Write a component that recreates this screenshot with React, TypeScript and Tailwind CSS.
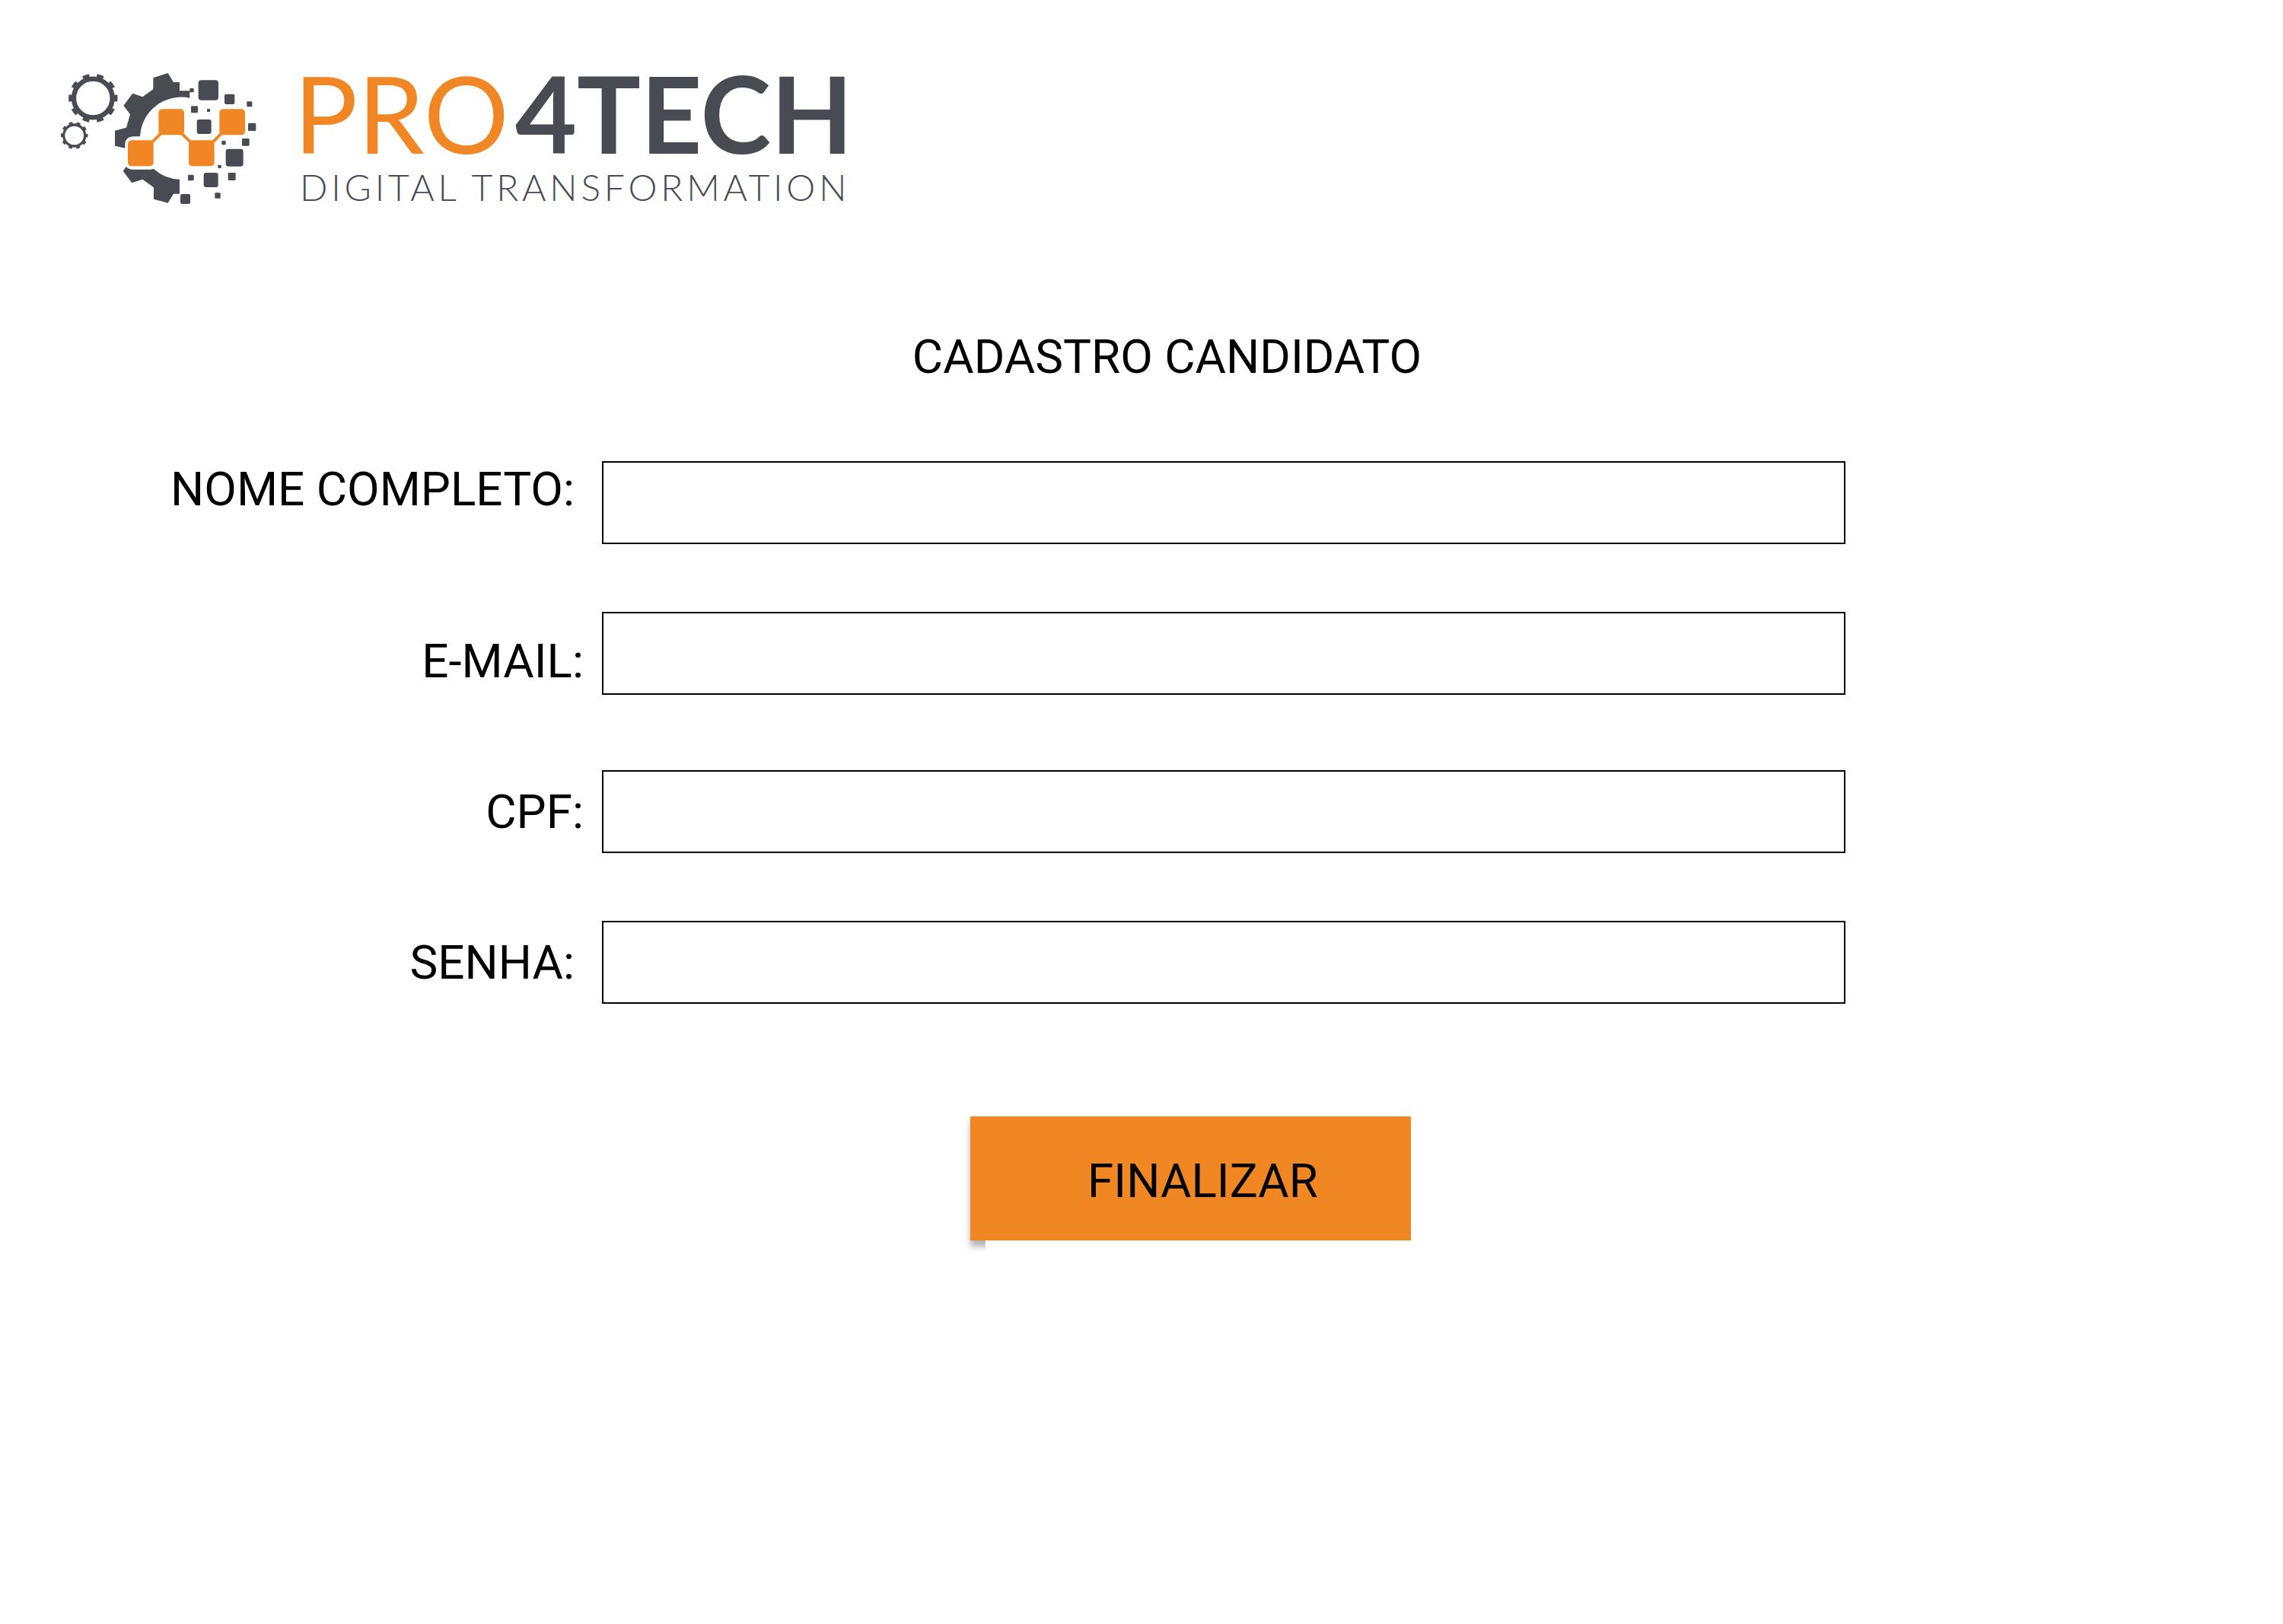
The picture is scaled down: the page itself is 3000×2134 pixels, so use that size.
const darkSquares: [number, number, number, number][] = [
  [602, 76, 79, 12],
  [705, 131, 40, 6],
  [793, 160, 21, 3],
  [568, 108, 16, 3],
  [573, 178, 27, 4],
  [636, 189, 12, 2],
  [596, 231, 57, 9],
  [798, 245, 31, 4],
  [774, 306, 29, 4],
  [694, 315, 16, 3],
  [710, 347, 69, 10],
  [679, 410, 13, 2],
  [623, 441, 57, 9],
  [719, 441, 30, 4],
  [561, 449, 23, 3],
  [667, 520, 22, 3],
  [531, 525, 39, 6],
];

const orangeSquares: [number, number][] = [
  [445, 190],
  [685, 190],
  [324, 313],
  [564, 313],
];

function LogoMark() {
  return (
    <svg viewBox="0 0 900 600" className="mt-0.5 h-[200px] w-[300px] shrink-0" aria-hidden="true">
      <g fill="none" stroke="#484b52">
        <circle cx="187" cy="147" r="76" strokeWidth="19" />
        <circle cx="187" cy="147" r="89" strokeWidth="15" pathLength={20} strokeDasharray="0.95 1.05" strokeDashoffset="0.475" />
        <circle cx="113" cy="294" r="42" strokeWidth="10" />
        <circle cx="113" cy="294" r="49" strokeWidth="9" pathLength={20} strokeDasharray="0.95 1.05" strokeDashoffset="0.475" />
      </g>
      <g fill="#484b52">
        <path d="M424 67 482 48 504 84H528V118H568V146A163 163 0 0 0 372 298H344Q313 300 313 330V344L273 335V275L318 263 333 211 307 176 343 128 382 142 424 112Z" />
        <path d="M318 417 305 434 340 481 382 467 426 499V545L482 560 504 524H528V467A163 163 0 0 1 425 425L416 428H340Q324 426 318 417Z" />
        {darkSquares.map(([x, y, size, r]) => (
          <rect key={`${x}-${y}`} x={x} y={y} width={size} height={size} rx={r} />
        ))}
      </g>
      <path d="M418 322 454 286M536 286 573 322M657 322 693 286" stroke="#f18724" strokeWidth="12" />
      <g fill="#f18724">
        {orangeSquares.map(([x, y]) => (
          <rect key={`${x}-${y}`} x={x} y={y} width="101" height="102" rx="14" />
        ))}
      </g>
    </svg>
  );
}

function Field({
  id,
  label,
  type,
  labelClass,
}: {
  id: string;
  label: string;
  type: string;
  labelClass: string;
}) {
  return (
    <div className="grid grid-cols-[791fr_1634fr_575fr] items-center">
      <label htmlFor={id} className={`justify-self-end whitespace-nowrap ${labelClass}`}>
        {label}
      </label>
      <input
        id={id}
        name={id}
        type={type}
        className="h-[109px] w-full min-w-0 border-2 border-black bg-white px-6 outline-none"
      />
    </div>
  );
}

export default function App() {
  return (
    <main className="min-h-screen bg-white font-[Roboto,sans-serif] text-[62px] leading-none text-black">
      <header className="flex items-start gap-[26px] pt-[78px] pl-[60px]">
        <LogoMark />
        <div className="font-[Lato,sans-serif] whitespace-nowrap text-[#484b52]">
          <p className="flex gap-2 text-[140px] leading-none">
            <span className="text-[#f18724]">PRO</span>
            <span className="font-bold">4TECH</span>
          </p>
          <p className="mt-1 pl-2 text-5xl leading-none font-light tracking-widest">
            DIGITAL TRANSFORMATION
          </p>
        </div>
      </header>

      <h1 className="mt-[158px] pl-[67px] text-center">CADASTRO CANDIDATO</h1>

      <form className="mt-[106px]" onSubmit={(e) => e.preventDefault()}>
        <div className="flex flex-col gap-[99px]">
          <div className="flex flex-col gap-[89px]">
            <Field id="nome" label="NOME COMPLETO:" type="text" labelClass="pr-9 pb-9" />
            <Field id="email" label="E-MAIL:" type="email" labelClass="pr-6 pt-5" />
          </div>
          <div className="flex flex-col gap-[89px]">
            <Field id="cpf" label="CPF:" type="text" labelClass="pr-6" />
            <Field id="senha" label="SENHA:" type="password" labelClass="pr-9" />
          </div>
        </div>

        <div className="mt-[148px] flex justify-center pl-[129px]">
          <div className="relative isolate">
            <span className="absolute inset-0 -z-10 shadow-[0_8px_8px_rgba(0,0,0,0.3)] [clip-path:inset(0_559px_-16px_-10px)]" />
            <button
              type="submit"
              className="h-[163px] w-[579px] bg-[#f08723] pt-1.5 pl-8 text-center"
            >
              FINALIZAR
            </button>
          </div>
        </div>
      </form>
    </main>
  );
}
